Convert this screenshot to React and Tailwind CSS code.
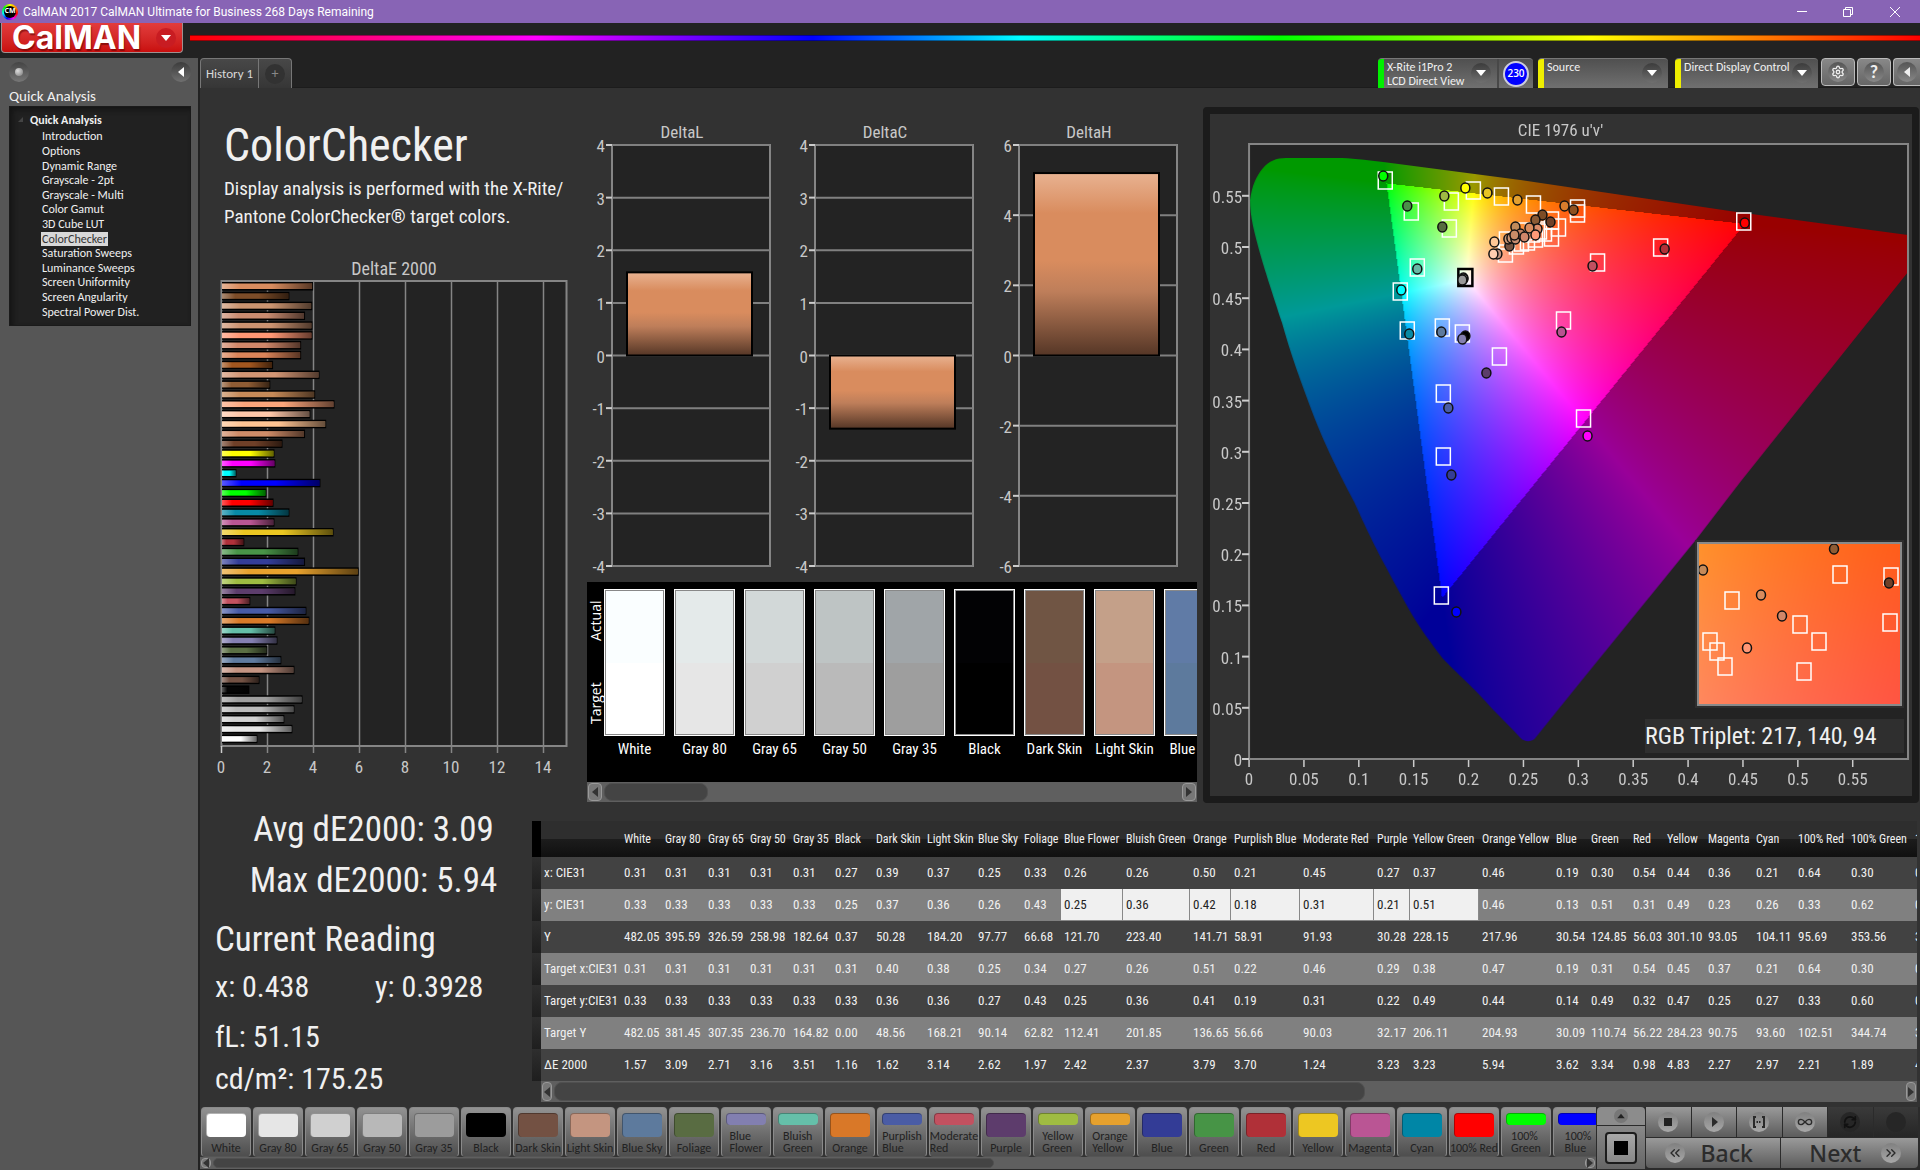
import { useEffect, useRef } from "react";
import { ChevronsLeft, ChevronsRight, Infinity as InfinityIcon, RefreshCw, Settings } from "lucide-react";

/* ---------- data ---------- */

const NAV = [
  "Introduction", "Options", "Dynamic Range", "Grayscale - 2pt", "Grayscale - Multi", "Color Gamut", "3D Cube LUT",
  "ColorChecker", "Saturation Sweeps", "Luminance Sweeps", "Screen Uniformity", "Screen Angularity", "Spectral Power Dist.",
];

const DELTA_E = [
  [3.96, "#d98c5e"], [2.93, "#7c4c28"], [3.92, "#cb9470"], [3.61, "#c98b70"], [3.93, "#cb9270"], [3.93, "#ff9775"],
  [3.44, "#d18769"], [3.44, "#db8459"], [2.22, "#a2561f"], [4.24, "#d39674"], [2.1, "#8f5c34"], [4.05, "#c68a58"],
  [4.89, "#fba57b"], [3.84, "#ffc8aa"], [4.53, "#ffc493"], [3.61, "#cf8c68"], [2.63, "#6f4028"], [2.28, "#ffff00"],
  [2.32, "#ff00ff"], [0.63, "#00ffff"], [4.28, "#0000ff"], [1.93, "#00ff00"], [2.24, "#ff0000"], [2.93, "#088aa6"],
  [2.28, "#ba5694"], [4.85, "#ebc722"], [0.97, "#b0313a"], [3.32, "#499548"], [3.61, "#343d98"], [5.94, "#e8a22e"],
  [3.24, "#9fbc42"], [3.19, "#5d3d6c"], [1.23, "#c35260"], [3.67, "#485ba6"], [3.8, "#d97a28"], [2.32, "#65bfa9"],
  [2.41, "#8580b2"], [1.97, "#5b6f44"], [2.58, "#5f7b9f"], [3.15, "#c49482"], [1.63, "#735244"], [1.19, "#050505"],
  [3.5, "#9f9f9f"], [3.15, "#bbbbbb"], [2.71, "#d2d2d2"], [3.06, "#e8e8e8"], [1.54, "#ffffff"],
];

const STRIP = [
  ["White", "bg-[#fafeff]", "bg-[#ffffff]"],
  ["Gray 80", "bg-[#e4eaea]", "bg-[#e6e6e6]"],
  ["Gray 65", "bg-[#d2d8d8]", "bg-[#d0d0d0]"],
  ["Gray 50", "bg-[#bec4c4]", "bg-[#bababa]"],
  ["Gray 35", "bg-[#a0a5a8]", "bg-[#9e9e9e]"],
  ["Black", "bg-[#020204]", "bg-[#000000]"],
  ["Dark Skin", "bg-[#705544]", "bg-[#735143]"],
  ["Light Skin", "bg-[#c4a089]", "bg-[#c49580]"],
  ["Blue Sky", "bg-[#607ba6]", "bg-[#5d7a9d]"],
];

const COLUMNS = [
  [41, "White", "0.31", "0.33", "482.05", "0.31", "0.33", "482.05", "1.57"],
  [43, "Gray 80", "0.31", "0.33", "395.59", "0.31", "0.33", "381.45", "3.09"],
  [42, "Gray 65", "0.31", "0.33", "326.59", "0.31", "0.33", "307.35", "2.71"],
  [43, "Gray 50", "0.31", "0.33", "258.98", "0.31", "0.33", "236.70", "3.16"],
  [42, "Gray 35", "0.31", "0.33", "182.64", "0.31", "0.33", "164.82", "3.51"],
  [41, "Black", "0.27", "0.25", "0.37", "0.31", "0.33", "0.00", "1.16"],
  [51, "Dark Skin", "0.39", "0.37", "50.28", "0.40", "0.36", "48.56", "1.62"],
  [51, "Light Skin", "0.37", "0.36", "184.20", "0.38", "0.36", "168.21", "3.14"],
  [46, "Blue Sky", "0.25", "0.26", "97.77", "0.25", "0.27", "90.14", "2.62"],
  [40, "Foliage", "0.33", "0.43", "66.68", "0.34", "0.43", "62.82", "1.97"],
  [62, "Blue Flower", "0.26", "0.25", "121.70", "0.27", "0.25", "112.41", "2.42"],
  [67, "Bluish Green", "0.26", "0.36", "223.40", "0.26", "0.36", "201.85", "2.37"],
  [41, "Orange", "0.50", "0.42", "141.71", "0.51", "0.41", "136.65", "3.79"],
  [69, "Purplish Blue", "0.21", "0.18", "58.91", "0.22", "0.19", "56.66", "3.70"],
  [74, "Moderate Red", "0.45", "0.31", "91.93", "0.46", "0.31", "90.03", "1.24"],
  [36, "Purple", "0.27", "0.21", "30.28", "0.29", "0.22", "32.17", "3.23"],
  [69, "Yellow Green", "0.37", "0.51", "228.15", "0.38", "0.49", "206.11", "3.23"],
  [74, "Orange Yellow", "0.46", "0.46", "217.96", "0.47", "0.44", "204.93", "5.94"],
  [35, "Blue", "0.19", "0.13", "30.54", "0.19", "0.14", "30.09", "3.62"],
  [42, "Green", "0.30", "0.51", "124.85", "0.31", "0.49", "110.74", "3.34"],
  [34, "Red", "0.54", "0.31", "56.03", "0.54", "0.32", "56.22", "0.98"],
  [41, "Yellow", "0.44", "0.49", "301.10", "0.45", "0.47", "284.23", "4.83"],
  [48, "Magenta", "0.36", "0.23", "93.05", "0.37", "0.25", "90.75", "2.27"],
  [42, "Cyan", "0.21", "0.26", "104.11", "0.21", "0.27", "93.60", "2.97"],
  [53, "100% Red", "0.64", "0.33", "95.69", "0.64", "0.33", "102.51", "2.21"],
  [64, "100% Green", "0.30", "0.62", "353.56", "0.30", "0.60", "344.74", "1.89"],
  [60, "100% Blue", "0.15", "0.06", "31.29", "0.15", "0.06", "34.79", "4.25"],
];

const ROWS = ["x: CIE31", "y: CIE31", "Y", "Target x:CIE31", "Target y:CIE31", "Target Y", "ΔE 2000"];

const PATCHES = [
  ["White", "bg-[#ffffff]"], ["Gray 80", "bg-[#e6e6e6]"], ["Gray 65", "bg-[#d0d0d0]"], ["Gray 50", "bg-[#b8b8b8]"],
  ["Gray 35", "bg-[#9c9c9c]"], ["Black", "bg-[#000000]"], ["Dark Skin", "bg-[#735143]"], ["Light Skin", "bg-[#c49580]"],
  ["Blue Sky", "bg-[#5d7a9d]"], ["Foliage", "bg-[#596c42]"], ["Blue Flower", "bg-[#827fb0]", true],
  ["Bluish Green", "bg-[#65bfa9]", true], ["Orange", "bg-[#d97828]"], ["Purplish Blue", "bg-[#4a5ca5]", true],
  ["Moderate Red", "bg-[#c25160]", true], ["Purple", "bg-[#5d3c6c]"], ["Yellow Green", "bg-[#9fbc42]", true],
  ["Orange Yellow", "bg-[#e6a12e]", true], ["Blue", "bg-[#333c96]"], ["Green", "bg-[#479446]"], ["Red", "bg-[#b03038]"],
  ["Yellow", "bg-[#edc722]"], ["Magenta", "bg-[#ba5594]"], ["Cyan", "bg-[#0086a6]"], ["100% Red", "bg-[#ff0000]"],
  ["100% Green", "bg-[#00ff00]", true], ["100% Blue", "bg-[#0000ff]", true],
];

/* Marker coordinates are panel units: 0..701 across, 0..682 down. */
const TARGETS = [
  [175, 66], [263, 76], [291, 82], [241, 87], [201, 97], [239, 114], [323, 90], [367, 94], [367, 99], [533, 107],
  [450, 133], [387, 148], [207, 153], [190, 177], [197, 216], [232, 213], [252, 219], [289, 242], [353, 206],
  [233, 279], [373, 304], [233, 342], [231, 481], [348, 113], [341, 123], [341, 106], [296, 126], [295, 139],
  [306, 131], [334, 118], [325, 124], [317, 127], [311, 128], [322, 119], [314, 117], [329, 116],
];

const READINGS = [
  [173, 62, "#00ff00"], [255, 74, "#ffff00"], [277, 79, "#e8c424"], [307, 86, "#e3a02f"], [354, 92, "#d87c2c"],
  [363, 96, "#8f5020"], [234, 82, "#9fbb44"], [197, 92, "#4a8f48"], [232, 113, "#566b3f"], [332, 101, "#7c4c26"],
  [325, 106, "#8a5a34"], [340, 108, "#6f4028"], [305, 113, "#c18a5a"], [327, 115, "#d98c6a"], [319, 114, "#d98c5e"],
  [299, 132, "#73513f"], [284, 128, "#ffc896"], [287, 140, "#c29582"], [283, 140, "#ffcdb0"], [298, 125, "#c89878"],
  [301, 124, "#cf9572"], [305, 125, "#c88c70"], [310, 120, "#c08060"], [304, 121, "#c98d68"], [314, 123, "#d0866a"],
  [325, 121, "#ff9a78"], [382, 152, "#c05060"], [454, 135, "#b03038"], [534, 109, "#ff0000"], [207, 155, "#66b9a5"],
  [191, 176, "#00ffff"], [199, 220, "#088aa4"], [231, 218, "#5d7a9d"], [255, 222, "#000000"], [252, 225, "#8580b0"],
  [351, 218, "#b85290"], [276, 259, "#5c3d6b"], [238, 294, "#4a5ca5"], [377, 322, "#ff00ff"], [241, 361, "#353d95"],
  [246, 498, "#0000ff"], [253, 164, "#dddddd"], [253, 165, "#bbbbbb"], [252, 166, "#999999"],
];

const INSET_TARGETS = [[141, 30], [192, 32], [33, 56], [101, 80], [120, 97], [191, 78], [11, 97], [18, 107], [26, 122], [105, 127]];
const INSET_READINGS = [
  [135, 5, "#8f5c34"], [4, 26, "#c68a58"], [62, 51, "#d98c5e"], [83, 72, "#d18769"], [48, 104, "#ff9775"], [190, 39, "#6f4028"],
];

/* ---------- chromaticity painting ---------- */

function uvToRgb(u, v) {
  const d = 6 * u - 16 * v + 12;
  const x = (9 * u) / d;
  const y = Math.max((4 * v) / d, 0.0001);
  const X = x / y;
  const Z = (1 - x - y) / y;
  const lin = [
    3.2406 * X - 1.5372 - 0.4986 * Z,
    -0.9689 * X + 1.8758 + 0.0415 * Z,
    0.0557 * X - 0.204 + 1.057 * Z,
  ];
  const inside = Math.min(...lin) >= -0.001;
  const top = Math.max(...lin);
  return [lin.map((c) => Math.pow(Math.max(c, 0) / top, 0.8) * 255), inside];
}

function paintField(width, height, toUv) {
  const off = document.createElement("canvas");
  off.width = width;
  off.height = height;
  const ctx = off.getContext("2d");
  const img = ctx.createImageData(width, height);
  for (let py = 0; py < height; py += 1) {
    for (let px = 0; px < width; px += 1) {
      const [u, v] = toUv(px, py);
      const [rgb, inside] = uvToRgb(u, v);
      const k = inside ? 1 : 0.6;
      const i = (py * width + px) * 4;
      img.data[i] = rgb[0] * k;
      img.data[i + 1] = rgb[1] * k;
      img.data[i + 2] = rgb[2] * k;
      img.data[i + 3] = 255;
    }
  }
  ctx.putImageData(img, 0, 0);
  return off;
}

const LOCUS =
  "M40 86 C42 72 46 62 53 54 C59 47 66 44 76 44 L127 44 C140 44 155 46 173 48 L310 66 L526 98 L697 121 L697 158 L531 366 L485 426 L365 574 L324 625 " +
  "C320 628 314 628 310 624 C300 613 291 604 283 596 C262 572 247 560 232 544 C220 528 211 516 202 501 C190 480 182 465 173 448 " +
  "C160 423 154 410 144 388 C125 352 113 326 104 303 C90 266 80 238 72 209 C62 178 56 160 51 143 C44 118 40 102 40 86 Z";

function Field({ className, width, height, toUv, clip }) {
  const ref = useRef(null);
  useEffect(() => {
    const ctx = ref.current.getContext("2d");
    ctx.clearRect(0, 0, width, height);
    ctx.save();
    if (clip) ctx.clip(new Path2D(clip));
    ctx.drawImage(paintField(width, height, toUv), 0, 0);
    ctx.restore();
  }, [width, height, toUv, clip]);
  return <canvas ref={ref} width={width} height={height} className={className} />;
}

const panelUv = (px, py) => [(px - 39) / 1096, (645 - py) / 1024];
const insetUv = (px, py) => [0.2495 + (px / 205) * 0.044, 0.529 - (py / 162) * 0.029];

/* ---------- small pieces ---------- */

function Tri({ dir, className }) {
  const d = { down: "M0 1h10L5 7z", left: "M7 0v10L1 5z", right: "M1 0v10l6-5z", up: "M0 7h10L5 1z" }[dir];
  return (
    <svg viewBox={dir === "left" || dir === "right" ? "0 0 8 10" : "0 0 10 8"} className={className} fill="currentColor" aria-hidden="true">
      <path d={d} />
    </svg>
  );
}

function ScrollBar({ className, arrow, thumb }) {
  return (
    <div className={`flex bg-[#5f5f5f] p-px ${className}`}>
      <button aria-label="Scroll left" className={`flex shrink-0 items-center justify-center rounded border border-[#999] bg-[#777] text-[#333] ${arrow}`}>
        <Tri dir="left" className="h-2.5 w-2" />
      </button>
      <div className="mx-0.5 flex min-w-0 flex-1">
        <div className={`rounded-lg border border-[#505050] bg-[#444] ${thumb}`} />
      </div>
      <button aria-label="Scroll right" className={`flex shrink-0 items-center justify-center rounded border border-[#999] bg-[#777] text-[#333] ${arrow}`}>
        <Tri dir="right" className="h-2.5 w-2" />
      </button>
    </div>
  );
}

function RoundArrow({ dir = "down" }) {
  return (
    <span className="flex h-5 w-5 shrink-0 items-center justify-center rounded-full bg-linear-to-b from-[#3c3c3c] to-[#707070] text-white">
      <Tri dir={dir} className={dir === "down" ? "h-2 w-2.5" : "h-2.5 w-2"} />
    </span>
  );
}

/* ---------- charts ---------- */

function DeltaEChart() {
  const x = (v) => 21 + v * 23;
  return (
    <svg viewBox="0 0 380 532" className="block h-[532px] w-full font-['Roboto_Condensed',Carlito,sans-serif]" role="img" aria-label="DeltaE 2000">
      <defs>
        <linearGradient id="barShade">
          <stop offset="0" stopColor="#fff" stopOpacity=".35" />
          <stop offset=".2" stopColor="#fff" stopOpacity="0" />
          <stop offset=".55" stopColor="#000" stopOpacity="0" />
          <stop offset="1" stopColor="#000" stopOpacity=".6" />
        </linearGradient>
      </defs>
      <text x="194" y="17" textAnchor="middle" className="fill-[#c8c8c8] text-[18px]">DeltaE 2000</text>
      <rect x="21.5" y="23" width="345" height="465" fill="#232323" stroke="#858585" strokeWidth="2" />
      {[2, 4, 6, 8, 10, 12, 14].map((v) => (
        <path key={v} d={`M${x(v) + 0.5} 23V495`} stroke="#858585" strokeWidth="1.5" />
      ))}
      <path d="M21.5 488v7" stroke="#ccc" strokeWidth="1.5" />
      {DELTA_E.map(([v, c], i) => (
        <g key={i}>
          <rect x="22" y={24 + i * 9.84} width={v * 23} height="8.5" fill="#000" />
          <rect x="22" y={25.5 + i * 9.84} width={v * 23 - 1} height="5.5" fill={c} />
          <rect x="22" y={25.5 + i * 9.84} width={v * 23 - 1} height="5.5" fill="url(#barShade)" />
        </g>
      ))}
      {[0, 2, 4, 6, 8, 10, 12, 14].map((v) => (
        <text key={v} x={x(v)} y="515" textAnchor="middle" className="fill-[#c8c8c8] text-[17px]">{v}</text>
      ))}
    </svg>
  );
}

function DeltaPlot({ title, left, max, step, value }) {
  const top = 31;
  const h = 421;
  const y = (v) => top + ((max - v) / (2 * max)) * h;
  const ticks = [];
  for (let v = max; v >= -max; v -= step) ticks.push(v);
  const barTop = Math.min(y(0), y(value));
  const barH = Math.abs(y(value) - y(0));
  return (
    <g>
      <text x={left + 70} y="24" textAnchor="middle" className="fill-[#c8c8c8] text-[17px]">{title}</text>
      <rect x={left} y={top} width="158" height={h} fill="#232323" stroke="#858585" strokeWidth="2" />
      {ticks.map((v) => (
        <g key={v}>
          <path d={`M${left} ${y(v)}h158`} stroke="#808080" strokeWidth="2" />
          <path d={`M${left - 6} ${y(v)}h6`} stroke="#ccc" strokeWidth="2" />
          <text x={left - 7} y={y(v) + 7} textAnchor="end" className="fill-[#c8c8c8] text-[17px]">{v}</text>
        </g>
      ))}
      <rect x={left + 15} y={barTop} width="125" height={barH} fill="url(#deltaFill)" stroke="#000" strokeWidth="2" />
    </g>
  );
}

function DeltaCharts() {
  return (
    <svg viewBox="0 0 617 468" className="block h-[468px] w-full font-['Roboto_Condensed',Carlito,sans-serif]" role="img" aria-label="Delta L, C and H">
      <defs>
        <linearGradient id="deltaFill" x2="0" y2="1">
          <stop offset="0" stopColor="#e8b291" />
          <stop offset=".22" stopColor="#d98c5e" />
          <stop offset=".48" stopColor="#d98c5e" />
          <stop offset=".65" stopColor="#be7e5a" />
          <stop offset="1" stopColor="#553626" />
        </linearGradient>
      </defs>
      <DeltaPlot title="DeltaL" left={32} max={4} step={1} value={1.58} />
      <DeltaPlot title="DeltaC" left={235} max={4} step={1} value={-1.39} />
      <DeltaPlot title="DeltaH" left={439} max={6} step={2} value={5.2} />
    </svg>
  );
}

function Box({ x, y, color = "#fff", width = 1.5 }) {
  return <rect x={x - 7} y={y - 8} width="14" height="17" fill="none" stroke={color} strokeWidth={width} />;
}

function Dot({ x, y, color }) {
  return <ellipse cx={x} cy={y} rx="4.5" ry="5" fill={color} stroke="#111" strokeWidth="1.5" />;
}

function CieChart() {
  const ticks = ["0", "0.05", "0.1", "0.15", "0.2", "0.25", "0.3", "0.35", "0.4", "0.45", "0.5", "0.55"];
  return (
    <section className="rounded-sm border-[7px] border-[#1b1b1b] bg-[#323232]" aria-label="CIE 1976 u'v'">
      <div className="relative h-[682px] font-['Roboto_Condensed',Carlito,sans-serif]">
        <svg viewBox="0 0 701 682" preserveAspectRatio="none" className="absolute inset-0 h-full w-full">
          <rect x="39" y="30" width="658" height="615" fill="#232323" />
        </svg>
        <Field className="absolute inset-0 h-full w-full" width={701} height={682} toUv={panelUv} clip={LOCUS} />
        <svg viewBox="0 0 701 682" preserveAspectRatio="none" className="absolute inset-0 h-full w-full">
          <text x="350" y="22" textAnchor="middle" className="fill-[#c8c8c8] text-[17px]">CIE 1976 u'v'</text>
          <rect x="39" y="30" width="658" height="615" fill="none" stroke="#858585" strokeWidth="2" />
          {ticks.map((t, i) => (
            <g key={t}>
              <path d={`M${39 + i * 54.8} 646v7`} stroke="#ccc" strokeWidth="1.5" />
              <text x={39 + i * 54.8} y="671" textAnchor="middle" className="fill-[#c8c8c8] text-[17px]">{t}</text>
              <path d={`M32 ${645 - i * 51.2}h7`} stroke="#ccc" strokeWidth="2" />
              <text x="32" y={652 - i * 51.2} textAnchor="end" className="fill-[#c8c8c8] text-[17px]">{t}</text>
            </g>
          ))}
          {TARGETS.map(([x, y], i) => <Box key={i} x={x} y={y} />)}
          <Box x={255} y={163} color="#000" width={2.5} />
          {READINGS.map(([x, y, c], i) => <Dot key={i} x={x} y={y} color={c} />)}
        </svg>
        <div className="absolute right-2 bottom-[88px] border-2 border-[#2e2e2e]">
          <div className="relative h-[164px] w-[205px] overflow-hidden border-2 border-[#8a8a8a]">
            <Field className="block h-full w-full" width={205} height={162} toUv={insetUv} />
            <svg viewBox="0 0 201 160" className="absolute inset-0 h-full w-full">
              {INSET_TARGETS.map(([x, y], i) => <Box key={i} x={x} y={y} />)}
              {INSET_READINGS.map(([x, y, c], i) => <Dot key={i} x={x} y={y} color={c} />)}
            </svg>
          </div>
        </div>
        <p className="absolute right-2 bottom-[43px] h-[34px] w-[259px] bg-[#2f2f2f] text-2xl leading-[34px] whitespace-nowrap text-[#f0f0f0]">
          RGB Triplet: 217, 140, 94
        </p>
      </div>
    </section>
  );
}

/* ---------- page parts ---------- */

function TitleBar() {
  return (
    <header className="flex h-[23px] shrink-0 items-center bg-[#8864b5] pl-0.5 text-white">
      <span className="flex h-4 w-4 items-center justify-center rounded-full bg-[conic-gradient(#ff0,#f80,#f00,#f0f,#00f,#0ff,#0f0,#ff0)]">
        <span className="flex h-3 w-3 items-center justify-center rounded-full bg-black text-[7px] font-bold">CM</span>
      </span>
      <span className="ml-[5px] font-[Roboto,sans-serif] text-xs">CalMAN 2017 CalMAN Ultimate for Business 268 Days Remaining</span>
      <div className="ml-auto flex items-center gap-[35px] pr-[19px]">
        <button aria-label="Minimize" className="h-3 w-2.5">
          <svg viewBox="0 0 10 12" className="h-3 w-2.5" stroke="currentColor"><path d="M0 5.500h10" /></svg>
        </button>
        <button aria-label="Restore" className="h-3 w-3">
          <svg viewBox="0 0 12 12" className="h-3 w-3" stroke="currentColor" fill="none"><path d="M1.500 3.500h7v7h-7zM3.500 3.500v-2h7v7h-2" /></svg>
        </button>
        <button aria-label="Close" className="h-3 w-3">
          <svg viewBox="0 0 12 12" className="h-3 w-3" stroke="currentColor"><path d="M1 1l10 10M11 1L1 11" /></svg>
        </button>
      </div>
    </header>
  );
}

function BrandRow() {
  return (
    <div className="flex h-[35px] shrink-0 items-start">
      <button className="ml-px flex h-[30px] w-[182px] shrink-0 items-center justify-between rounded-b border border-t-0 border-[#a09090] bg-linear-to-b from-[#e23c3c] to-[#c90d0d] pr-[6px] pl-2.5 text-white">
        <span className="font-['Inter',sans-serif] text-[32px] leading-[28px] font-bold [text-shadow:1px_2px_1px_#5008]">CalMAN</span>
        <span className="flex h-5 w-5 items-center justify-center rounded-full bg-[#c81c22]">
          <Tri dir="down" className="h-2 w-2.5" />
        </span>
      </button>
      <div className="mt-3 ml-[7px] h-1.5 flex-1 border-y border-black/40 bg-[linear-gradient(to_right,#f00,#f0f_20%,#00f_36%,#0ff_48%,#0f0_63%,#ff0_81%,#f00)]" />
    </div>
  );
}

function Sidebar() {
  return (
    <aside className="w-[200px] shrink-0 border-r-2 border-[#222] bg-[#565656] pt-1 pr-[7px] pl-[9px] font-[Carlito,Lato,sans-serif] text-[#f0f0f0]">
      <div className="flex items-center justify-between">
        <button aria-label="Pin" className="flex h-5 w-5 items-center justify-center rounded-full bg-linear-to-b from-[#444] to-[#777]">
          <span className="h-2 w-2 rounded-full bg-[radial-gradient(circle_at_35%_35%,#ddd,#777)]" />
        </button>
        <button aria-label="Collapse" className="rounded-full">
          <RoundArrow dir="left" />
        </button>
      </div>
      <h2 className="mt-1 text-[15px] leading-5">Quick Analysis</h2>
      <nav className="h-[220px] border border-[#1a1a1a] bg-[#212121] pt-1 shadow-[inset_3px_3px_5px_#151515]">
        <div className="flex h-[18px] items-center gap-1.5 pl-2 text-xs font-bold">
          <svg viewBox="0 0 6 6" className="h-1.5 w-1.5" fill="#444"><path d="M5 0v5H0z" /></svg>
          Quick Analysis
        </div>
        <ul className="grid h-[190px] auto-rows-fr pl-[31px] text-xs">
          {NAV.map((n) => (
            <li key={n} className="flex items-center">
              <button className={`leading-[14px] whitespace-nowrap ${n === "ColorChecker" ? "bg-[#d8d8d8] px-px text-[#333]" : "px-px"}`}>{n}</button>
            </li>
          ))}
        </ul>
      </nav>
    </aside>
  );
}

function Device({ bar, width, lines, badge }) {
  return (
    <div className={`flex h-[30px] overflow-hidden rounded-t border-t border-[#777] bg-linear-to-b from-[#505050] to-[#707070] ${width}`}>
      <span className={`w-1.5 shrink-0 ${bar}`} />
      <button className="flex min-w-0 flex-1 items-start justify-between pr-1.5 pl-[3px] text-left text-[12px] leading-[14px] whitespace-nowrap text-[#f0f0f0]">
        <span className="pt-px">{lines.map((l) => <span key={l} className="block">{l}</span>)}</span>
        <span className="mt-1"><RoundArrow /></span>
      </button>
      {badge && (
        <span className="flex w-9 items-center justify-center border-l-2 border-[#484848]">
          <span className="flex h-[26px] w-[26px] items-center justify-center rounded-full border-2 border-[#ccd] bg-[#0000ff] font-['Open_Sans',sans-serif] text-[10px] font-semibold text-white">{badge}</span>
        </span>
      )}
    </div>
  );
}

function TabRow() {
  const btn = "flex h-[28px] items-center justify-center rounded border border-[#bbb] bg-linear-to-b from-[#888] to-[#666]";
  const orb = "flex h-5 w-5 items-center justify-center rounded-full bg-linear-to-b from-[#555] to-[#888] text-[#eee]";
  return (
    <div className="flex h-[30px] shrink-0 items-start border-b border-[#1c1c1c] font-[Carlito,Lato,sans-serif]">
      <div className="flex h-[30px] rounded-t border border-b-0 border-[#777] bg-linear-to-b from-[#484848] to-[#363636] text-[#d8d8d8]">
        <button className="w-[58px] border-r border-[#777] text-[13px]">History 1</button>
        <button aria-label="Add history" className="flex w-8 items-center justify-center">
          <span className="flex h-5 w-5 items-center justify-center rounded-full bg-[#323232] text-sm text-[#888]">+</span>
        </button>
      </div>
      <div className="ml-auto flex items-start">
        <Device bar="bg-[#00f000]" width="w-[155px] mr-[5px]" lines={["X-Rite i1Pro 2", "LCD Direct View"]} badge="230" />
        <Device bar="bg-[#eeee00]" width="w-[130px] mr-[7px]" lines={["Source"]} />
        <Device bar="bg-[#eeee00]" width="w-[143px] mr-[3px]" lines={["Direct Display Control"]} />
        <button aria-label="Settings" className={`w-[34px] mr-0.5 ${btn}`}>
          <span className={orb}><Settings className="h-3.5 w-3.5" strokeWidth={2.2} /></span>
        </button>
        <button aria-label="Help" className={`w-[34px] mr-0.5 ${btn}`}>
          <span className={`text-lg font-bold ${orb}`}>?</span>
        </button>
        <button aria-label="Collapse panel" className={`w-[27px] rounded-r-none border-r-0 ${btn}`}>
          <span className={orb}><Tri dir="left" className="h-2.5 w-2" /></span>
        </button>
      </div>
    </div>
  );
}

function Strip() {
  return (
    <div className="ml-[7px]">
      <div className="flex h-[200px] overflow-hidden bg-black pt-[7px] font-['Roboto_Condensed',Carlito,sans-serif] text-white">
        <div className="flex h-[147px] w-[17px] shrink-0 rotate-180 justify-between pt-3 pb-3 font-['Open_Sans',sans-serif] text-sm leading-[17px] [writing-mode:vertical-rl]">
          <span>Target</span>
          <span>Actual</span>
        </div>
        {STRIP.map(([name, actual, target]) => (
          <figure key={name} className="mr-[9px] w-[61px] shrink-0">
            <div className="flex h-[147px] flex-col border-2 border-white outline-1 -outline-offset-2 outline-[#888]">
              <div className={`flex-1 ${actual}`} />
              <div className={`flex-1 ${target}`} />
            </div>
            <figcaption className="pt-0.5 text-center text-[15px] whitespace-nowrap">{name}</figcaption>
          </figure>
        ))}
      </div>
      <ScrollBar className="h-5" arrow="w-3.5" thumb="w-[104px]" />
    </div>
  );
}

function Readings() {
  return (
    <div className="w-[332px] shrink-0 pt-px pl-[15px] font-['Roboto_Condensed',Carlito,sans-serif] text-[#f0f0f0]">
      <div className="text-center text-[35px] leading-[51px] whitespace-nowrap">
        <p>Avg dE2000: 3.09</p>
        <p>Max dE2000: 5.94</p>
      </div>
      <h2 className="mt-2 text-[35px] leading-[52px]">Current Reading</h2>
      <div className="text-[30px] leading-[42px]">
        <p className="flex"><span className="w-40">x: 0.438</span><span>y: 0.3928</span></p>
        <p className="mt-2">fL: 51.15</p>
        <p>cd/m²: 175.25</p>
      </div>
    </div>
  );
}

function DataTable() {
  return (
    <div className="mt-[18px] mr-[3px] min-w-0 flex-1">
      <div className="overflow-hidden">
        <table className="w-[1440px] table-fixed border-collapse text-left font-['Roboto_Condensed',Carlito,sans-serif] text-[13px] text-[#f0f0f0]">
          <colgroup>
            <col className="w-[9px]" />
            <col className="w-[80px]" />
            {COLUMNS.map((c) => <col key={c[1]} style={{ width: c[0] }} />)}
          </colgroup>
          <thead>
            <tr className="h-9 bg-linear-to-b from-[#2e2e2e] from-50% via-[#1c1c1c] via-51% to-[#101010] text-[12px]">
              <td className="bg-black" />
              <td />
              {COLUMNS.map((c) => <th key={c[1]} scope="col" className="pl-[3px] font-normal whitespace-nowrap">{c[1]}</th>)}
            </tr>
          </thead>
          <tbody>
            {ROWS.map((label, r) => (
              <tr key={label} className={`h-8 ${r % 2 ? "bg-[#808080]" : "bg-[#424242]"}`}>
                <td className="bg-linear-to-b from-[#2e2e2e] to-[#1e1e1e]" />
                <th scope="row" className="pl-[3px] font-normal whitespace-nowrap">{label}</th>
                {COLUMNS.map((c, i) => (
                  <td key={c[1]} className={`pl-[3px] ${r === 1 && i >= 10 && i <= 16 ? "bg-[#f0f0f0] text-[#222] shadow-[inset_-1px_-1px_#888]" : ""}`}>{c[r + 2]}</td>
                ))}
              </tr>
            ))}
          </tbody>
        </table>
      </div>
      <ScrollBar className="ml-[9px] h-[21px]" arrow="w-2.5" thumb="w-[811px]" />
    </div>
  );
}

function BottomBar() {
  const key = "flex h-[30px] flex-1 items-center justify-center bg-linear-to-b from-[#9a9a9a] to-[#5c5c5c]";
  const off = "flex h-[30px] flex-1 items-center justify-center bg-linear-to-b from-[#3a3a3a] to-[#262626]";
  const orb = "flex h-5 w-5 items-center justify-center rounded-full bg-linear-to-b from-[#808080] to-[#a8a8a8] text-[#2a2a2a]";
  return (
    <footer className="flex h-[63px] shrink-0 overflow-hidden bg-[#2b2b2b]">
      <div className="flex min-w-0 flex-1 flex-col">
        <div className="flex h-[50px] gap-0.5 overflow-hidden bg-[#333] pl-px">
          {PATCHES.map(([name, color, tall]) => (
            <button
              key={name}
              className="flex w-[50px] shrink-0 flex-col items-center justify-between rounded border border-[#8a8a8a] border-b-[#555] bg-linear-to-b from-[#929292] to-[#4e4e4e] pt-[5px] pb-0.5 font-[Carlito,Lato,sans-serif] text-[12px] leading-3 text-[#222]"
            >
              <span className={`w-10 shrink-0 rounded-sm border-t border-l border-black/30 ${tall ? "h-3" : "h-6"} ${color}`} />
              <span className={tall ? "w-min text-left" : "whitespace-nowrap"}>{name}</span>
            </button>
          ))}
        </div>
        <ScrollBar className="h-3" arrow="w-2.5" thumb="w-[781px]" />
      </div>
      <div className="mr-px ml-px flex w-12 flex-col gap-px">
        <button aria-label="Expand" className="flex h-[18px] items-center justify-center rounded-t bg-[#8c8c8c]">
          <span className="flex h-3.5 w-3.5 items-center justify-center rounded-full bg-[#777] text-[#222]"><Tri dir="up" className="h-1.5 w-2" /></span>
        </button>
        <button aria-label="Stop pattern" className="flex h-[43px] items-center justify-center bg-linear-to-b from-[#888] to-[#666]">
          <span className="flex h-8 w-8 items-center justify-center rounded border-2 border-[#1c1c1c] bg-linear-to-b from-[#a8a8a8] to-[#888]">
            <span className="h-3.5 w-3.5 bg-black" />
          </span>
        </button>
      </div>
      <div className="mr-0.5 flex w-[272px] flex-col gap-px">
        <div className="flex gap-px">
          <button aria-label="Stop" className={key}><span className={orb}><span className="h-2 w-2 bg-[#222]" /></span></button>
          <button aria-label="Play" className={key}><span className={orb}><Tri dir="right" className="ml-0.5 h-2.5 w-2" /></span></button>
          <button aria-label="Read series" className={key}>
            <span className={orb}>
              <svg viewBox="0 0 14 12" className="h-3 w-3.5" fill="none" stroke="currentColor" strokeWidth="2"><path d="M4 1H2v10h2M10 1h2v10h-2" /><path d="M4.500 6h5" strokeDasharray="1.500 1" /></svg>
            </span>
          </button>
          <button aria-label="Continuous" className={key}><span className={orb}><InfinityIcon className="h-4 w-4" /></span></button>
          <button aria-label="Refresh" className={off}>
            <span className="flex h-5 w-5 items-center justify-center rounded-full bg-[#262626] text-[#111]"><RefreshCw className="h-3.5 w-3.5" strokeWidth={3} /></span>
          </button>
          <button aria-label="Unavailable" className={off}><span className="h-5 w-5 rounded-full bg-[#262626]" /></button>
        </div>
        <div className="flex gap-px font-['Noto_Sans','Open_Sans',sans-serif] text-[23px] leading-none font-medium text-[#2c2c2c]">
          <button className={`gap-4 rounded-bl pr-2 ${key}`}><span className={orb}><ChevronsLeft className="h-4 w-4" /></span>Back</button>
          <button className={`gap-5 rounded-br pl-3 ${key}`}>Next<span className={orb}><ChevronsRight className="h-4 w-4" /></span></button>
        </div>
      </div>
    </footer>
  );
}

export default function App() {
  return (
    <div className="flex h-screen flex-col overflow-hidden bg-[#222]">
      <TitleBar />
      <BrandRow />
      <div className="flex min-h-0 flex-1">
        <Sidebar />
        <div className="flex min-w-0 flex-1 flex-col">
          <TabRow />
          <main className="flex min-h-0 flex-1 flex-col overflow-hidden bg-[#323232]">
            <div className="grid grid-cols-[380px_617px_minmax(0,1fr)]">
              <div>
                <div className="h-[170px] pt-[27px] pl-6 font-['Roboto_Condensed',Carlito,sans-serif] text-[#f0f0f0]">
                  <h1 className="text-[46px] leading-[60px]">ColorChecker</h1>
                  <p className="text-[19px] leading-7 whitespace-nowrap">
                    Display analysis is performed with the X-Rite/
                    <br />
                    Pantone ColorChecker® target colors.
                  </p>
                </div>
                <DeltaEChart />
              </div>
              <div className="pt-[26px]">
                <DeltaCharts />
                <Strip />
              </div>
              <div className="pt-[19px] pr-px pl-[6px]">
                <CieChart />
              </div>
            </div>
            <div className="flex">
              <Readings />
              <DataTable />
            </div>
          </main>
          <BottomBar />
        </div>
      </div>
    </div>
  );
}
